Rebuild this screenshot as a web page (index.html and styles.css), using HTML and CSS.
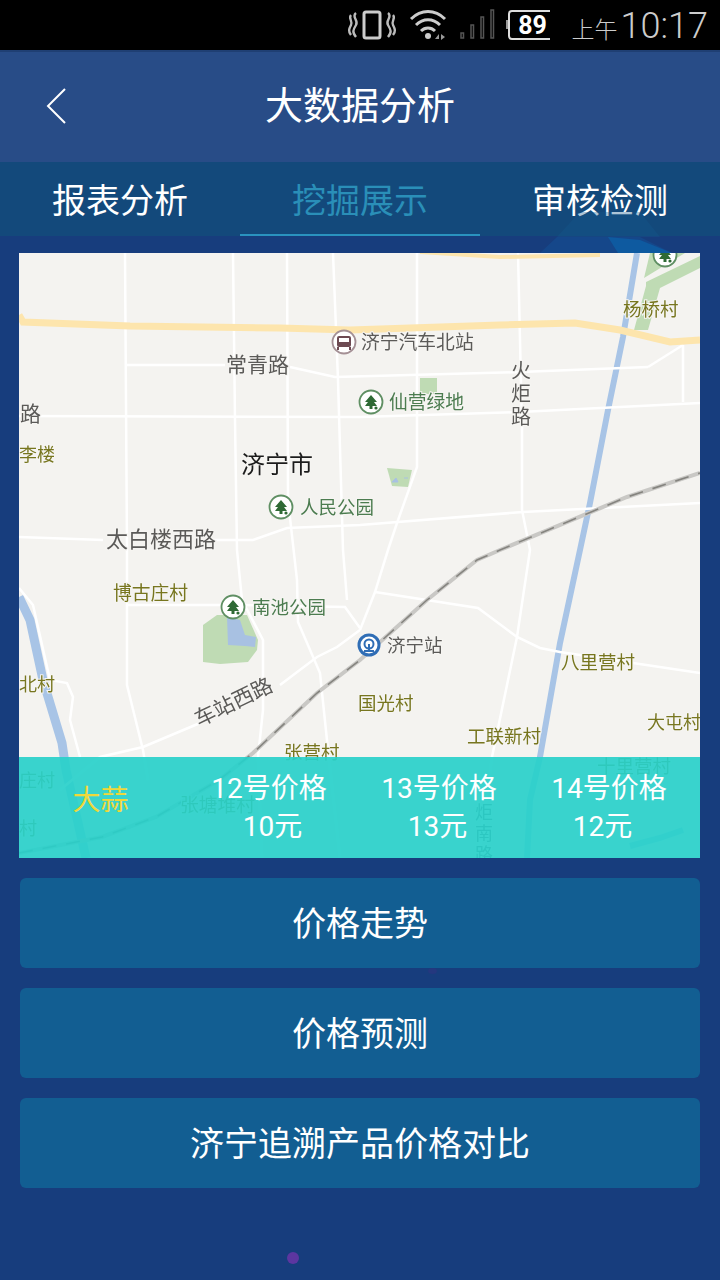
FILE: index.html
```html
<!DOCTYPE html>
<html lang="zh-CN">
<head>
  <meta charset="UTF-8" />
  <meta name="viewport" content="width=device-width, initial-scale=1.0" />
  <title>大数据分析</title>
  <link rel="stylesheet" href="styles.css">
</head>
<body>
  <div class="statusbar">
    <svg class="status-icons" width="210" height="50" viewBox="340 0 210 50">
      <!-- vibrate -->
      <rect x="364" y="12" width="16" height="26" rx="2" fill="none" stroke="#ccc" stroke-width="3"/>
      <path d="M356 13c-5 4 3 7 0 12s-4 7 0 12M351 15c-3 3 2 6 0 10s-3 6 0 10M388 13c5 4-3 7 0 12s4 7 0 12M393 15c3 3-2 6 0 10s3 6 0 10" fill="none" stroke="#bbb" stroke-width="2.4"/>
      <!-- wifi -->
      <path d="M411 19c10-10 24-10 34 0M416 25c7-7 17-7 24 0M421 31c4-4 10-4 14 0" fill="none" stroke="#ccc" stroke-width="3"/>
      <circle cx="428" cy="36" r="3" fill="#ccc"/>
      <path d="M435 39l4-5v5zM441 34l4 3-4 3z" fill="#999"/>
      <!-- signal -->
      <g fill="none" stroke="#555" stroke-width="1.5">
        <rect x="461" y="33" width="2.5" height="5"/>
        <rect x="471" y="25" width="2.5" height="13"/>
        <rect x="481" y="17" width="2.5" height="21"/>
        <rect x="491" y="10" width="2.5" height="28"/>
      </g>
      <!-- battery -->
      <rect x="509" y="11" width="47" height="28" rx="3" fill="none" stroke="#ddd" stroke-width="2"/>
      <rect x="506" y="20" width="2" height="9" fill="#999"/>
    </svg>
    <span class="battery-num">89</span>
    <span class="clock"><span class="clock-ampm">上午</span>10:17</span>
  </div>

  <div class="page">
    <svg class="page-deco" width="180" height="50" viewBox="540 210 180 50">
      <path d="M557 237L580 212H640L660 237z" fill="#155a8c" opacity="0.35"/>
      <path d="M540 253L557 237H640L672 253z" fill="#15478a"/>
      <path d="M608 237L640 240L672 253H618z" fill="#0e5aa0"/>
    </svg>

    <header class="topbar">
      <svg class="back" width="22" height="38" viewBox="0 0 22 38">
        <path d="M20 2L3 19L20 36" fill="none" stroke="#fff" stroke-width="2"/>
      </svg>
      <h1 class="title">大数据分析</h1>
    </header>

    <nav class="tabs">
      <a class="tab">报表分析</a>
      <a class="tab active">挖掘展示</a>
      <a class="tab">审核检测</a>
    </nav>

    <section class="map">
      <svg class="map-svg" width="681" height="605" viewBox="19 253 681 605">
        <defs>
          <g id="tree">
            <circle r="11.5" fill="#fff" stroke="#5f8f63" stroke-width="1.8"/>
            <path d="M0-7L6 0H3L6 4H1.5V7H-1.5V4H-6L-3 0H-6z" fill="#2f6a35"/>
            <circle cx="5" cy="6" r="1.6" fill="#2f6a35"/>
          </g>
        </defs>
        <rect x="19" y="253" width="681" height="605" fill="#f4f3f0"/>

        <!-- parks -->
        <g fill="#bfdbb4">
          <path d="M650 253L644 278L685 253z"/>
          <path d="M646 282L700 256V268L660 288L648 330H634L646 286z"/>
          <rect x="420" y="378" width="17" height="16"/>
          <path d="M387 468L412 470L408 487L392 486z"/>
          <path d="M203 625L217 615L247 615L258 640L257 650L248 662L220 664L203 662z"/>
        </g>
        <path d="M227 617L240 620L245 635L256 637L255 647L245 646L228 645z" fill="#a8c1e2"/>
        <path d="M392 482L396 478L398 482zM404 478H408" stroke="#a8c1e2" fill="#a8c1e2"/>

        <!-- water -->
        <g fill="none" stroke="#a8c4e6" stroke-linecap="butt">
          <path d="M637 253L623 337L608 410L590 503L580 550L560 643L540 757L530 800L527 858" stroke-width="6"/>
          <path d="M19 597L30 620L43 680L62 743L66 770L86 858" stroke-width="9"/>
          <path d="M630 846L660 838L683 830" stroke-width="6"/>
        </g>

        <!-- roads -->
        <g fill="none" stroke="#fff" stroke-width="2.5">
          <path d="M125 253L127 550L127 685L143 750L148 780"/>
          <path d="M233 253L235 420L237 550L242 600L263 640L263 710L258 757L262 858"/>
          <path d="M287 253L288 500L297 580L298 622L320 673L328 750L340 858"/>
          <path d="M333 253L338 380L343 550L347 600"/>
          <path d="M417 253V467L397 523L388 550L375 592L360 630"/>
          <path d="M518 253L522 427V510L530 550L517 637L492 757L478 858"/>
          <path d="M683 345V402M648 367L683 345"/>
          <path d="M125 365H225M290 367L335 377L520 372L648 367"/>
          <path d="M19 416L360 417L520 412L700 403"/>
          <path d="M19 537L103 540M213 540H253L287 528L360 525L523 512L700 503"/>
          <path d="M127 605H225M240 605L345 607L360 628"/>
          <path d="M60 790L100 757L143 747L200 723M280 685L317 657L337 647L360 630"/>
          <path d="M375 592L478 608L517 637L540 648L560 652L633 663L700 673"/>
          <path d="M19 588L33 605L50 680L67 683L73 697L70 720L80 757"/>
        </g>
        <g fill="none" stroke="#fde5ad">
          <path d="M19 315L23 322L130 326L280 328L350 330L500 325L575 323L620 330L670 342L700 340" stroke-width="7"/>
          <path d="M420 252L500 257L600 255" stroke-width="4"/>
        </g>

        <!-- railway -->
        <g fill="none">
          <path d="M19 853L102 837L156 817L219 780L253 753L317 693L360 660L427 600L477 560L500 550L627 497L700 473" stroke="#c9c8c5" stroke-width="4"/>
          <path d="M19 853L102 837L156 817L219 780L253 753L317 693L360 660L427 600L477 560L500 550L627 497L700 473" stroke="#85847f" stroke-width="1.6" stroke-dasharray="14 10"/>
        </g>

        <!-- labels -->
        <g class="lbl road">
          <text x="226" y="372" font-size="21">常青路</text>
          <text x="20" y="421" font-size="21">路</text>
          <text x="106" y="547" font-size="22">太白楼西路</text>
          <text transform="translate(199 727) rotate(-26)" font-size="21">车站西路</text>
          <text x="511" y="378" font-size="20">火</text>
          <text x="511" y="401" font-size="20">炬</text>
          <text x="511" y="424" font-size="20">路</text>
          <text x="361" y="349" font-size="18.8">济宁汽车北站</text>
          <text x="387" y="652" font-size="18.5">济宁站</text>
        </g>
        <text class="lbl city" x="241" y="473" font-size="24">济宁市</text>
        <g class="lbl park">
          <text x="389" y="409" font-size="18.8">仙营绿地</text>
          <text x="300" y="514" font-size="18.5">人民公园</text>
          <text x="252" y="614" font-size="18.5">南池公园</text>
        </g>
        <g class="lbl village">
          <text x="19" y="461" font-size="18">李楼</text>
          <text x="113" y="600" font-size="18.8">博古庄村</text>
          <text x="19" y="691" font-size="18">北村</text>
          <text x="623" y="316" font-size="18.5">杨桥村</text>
          <text x="561" y="669" font-size="18.5">八里营村</text>
          <text x="358" y="710" font-size="18.5">国光村</text>
          <text x="467" y="743" font-size="18.5">工联新村</text>
          <text x="647" y="729" font-size="18">大屯村</text>
          <text x="284" y="759" font-size="18.5">张营村</text>
          <text x="597" y="773" font-size="18.5">十里营村</text>
          <text x="180" y="812" font-size="18.8">张塘堆村</text>
          <text x="19" y="787" font-size="18">庄村</text>
          <text x="19" y="835" font-size="18">村</text>
        </g>
        <g class="lbl road">
          <text x="475" y="819" font-size="18">炬</text>
          <text x="475" y="840" font-size="18">南</text>
          <text x="475" y="861" font-size="18">路</text>
        </g>

        <!-- poi -->
        <use href="#tree" x="665" y="255"/>
        <use href="#tree" x="371" y="402"/>
        <use href="#tree" x="281" y="507"/>
        <use href="#tree" x="233" y="607"/>
        <g transform="translate(344 342)">
          <circle r="11.5" fill="#fff" stroke="#a49095" stroke-width="1.8"/>
          <rect x="-7" y="-6" width="14" height="11" rx="2" fill="#6d4a52"/>
          <rect x="-5" y="-4" width="10" height="4" fill="#fff"/>
          <path d="M-6 5V8M6 5V8" stroke="#6d4a52" stroke-width="2"/>
        </g>
        <g transform="translate(369 645)">
          <circle r="11.5" fill="#2f6db5"/>
          <circle r="8.5" fill="#fff"/>
          <circle cy="-1" r="4.5" fill="none" stroke="#2f6db5" stroke-width="2"/>
          <path d="M-5 6H5M0-1V6" stroke="#2f6db5" stroke-width="2"/>
        </g>
      </svg>

      <div class="price-bar">
        <div class="product">大蒜</div>
        <div class="prices">
          <div class="price-row">
            <span>12号价格</span>
            <span>13号价格</span>
            <span>14号价格</span>
          </div>
          <div class="price-row values">
            <span>10元</span>
            <span>13元</span>
            <span>12元</span>
          </div>
        </div>
      </div>
    </section>

    <div class="actions">
      <button class="action">价格走势</button>
      <button class="action">价格预测</button>
      <button class="action">济宁追溯产品价格对比</button>
    </div>

    <span class="dot-faint"></span>
    <span class="dot"></span>
  </div>
</body>
</html>
```

FILE: styles.css
```css
* {
  box-sizing: border-box;
}

body {
  margin: 0;
  width: 720px;
  height: 1280px;
  overflow: hidden;
  background: #173d7d;
  font-family: Roboto, "Noto Sans CJK SC", sans-serif;
  color: #fff;
}

.statusbar {
  position: relative;
  height: 50px;
  background: #000;
  display: flex;
  justify-content: flex-end;
  align-items: center;
  padding-right: 12px;
}

.status-icons {
  position: absolute;
  left: 340px;
  top: 0;
}

.battery-num {
  position: absolute;
  left: 509px;
  top: 11px;
  width: 47px;
  text-align: center;
  font-size: 25px;
  line-height: 29px;
  font-weight: 700;
}

.clock {
  margin-top: 6px;
  font-size: 36px;
  font-weight: 300;
  color: #ccc;
  line-height: 50px;
}

.clock-ampm {
  font-size: 23px;
  margin-right: 3px;
}

.page {
  position: relative;
  height: 1230px;
}

.page-deco {
  position: absolute;
  z-index: 1;
  left: 540px;
  top: 160px;
}

.topbar {
  position: relative;
  height: 112px;
  background: #284c87;
  border-top: 2px solid #1f3f73;
  display: flex;
  justify-content: center;
  align-items: center;
}

.back {
  position: absolute;
  left: 45px;
  top: 35px;
}

.title {
  margin: 0 0 10px;
  font-size: 38px;
  font-weight: 400;
}

.tabs {
  height: 74px;
  background: #13497b;
  display: flex;
}

.tab {
  flex: 1;
  padding-top: 2px;
  text-align: center;
  font-size: 34px;
  line-height: 74px;
}

.tab.active {
  color: #2a8fb8;
  border-bottom: 2px solid #2a93bf;
}

.map {
  position: relative;
  z-index: 2;
  width: 681px;
  height: 605px;
  margin: 17px 0 0 19px;
  overflow: hidden;
}

.map-svg {
  display: block;
  filter: blur(0.5px);
}

.lbl text,
.lbl {
  font-family: "Noto Sans CJK SC", sans-serif;
  paint-order: stroke;
  stroke: #f6f5f2;
  stroke-width: 2px;
}

.road text {
  fill: #5b5a58;
}

.city {
  fill: #1c1c1c;
}

.park text {
  fill: #4c7c50;
}

.village text {
  fill: #77761f;
}

.price-bar {
  position: absolute;
  left: 0;
  right: 0;
  bottom: 0;
  height: 101px;
  background: rgba(40, 208, 202, 0.92);
  display: flex;
}

.product {
  width: 163px;
  font-size: 28px;
  line-height: 88px;
  text-align: center;
  color: #f0d83a;
}

.prices {
  flex: 1;
  padding-top: 13px;
}

.price-row {
  display: flex;
  width: 510px;
  margin-left: 2px;
  font-size: 28px;
  line-height: 38px;
}

.price-row span {
  width: 170px;
  text-align: center;
}

.price-row.values {
  width: 495px;
  margin-left: 8px;
}

.price-row.values span {
  width: 165px;
}

.actions {
  display: flex;
  flex-direction: column;
  gap: 20px;
  margin: 20px 20px 0;
}

.action {
  height: 90px;
  border: none;
  border-radius: 6px;
  background: #125e92;
  color: #fff;
  font-family: inherit;
  font-size: 34px;
  padding: 0 0 4px;
}

.dot {
  position: absolute;
  left: 287px;
  top: 1202px;
  width: 12px;
  height: 12px;
  border-radius: 50%;
  background: #5c36a0;
}

.dot-faint {
  position: absolute;
  left: 428px;
  top: 918px;
  width: 9px;
  height: 6px;
  border-radius: 50%;
  background: #24387f;
}
```
